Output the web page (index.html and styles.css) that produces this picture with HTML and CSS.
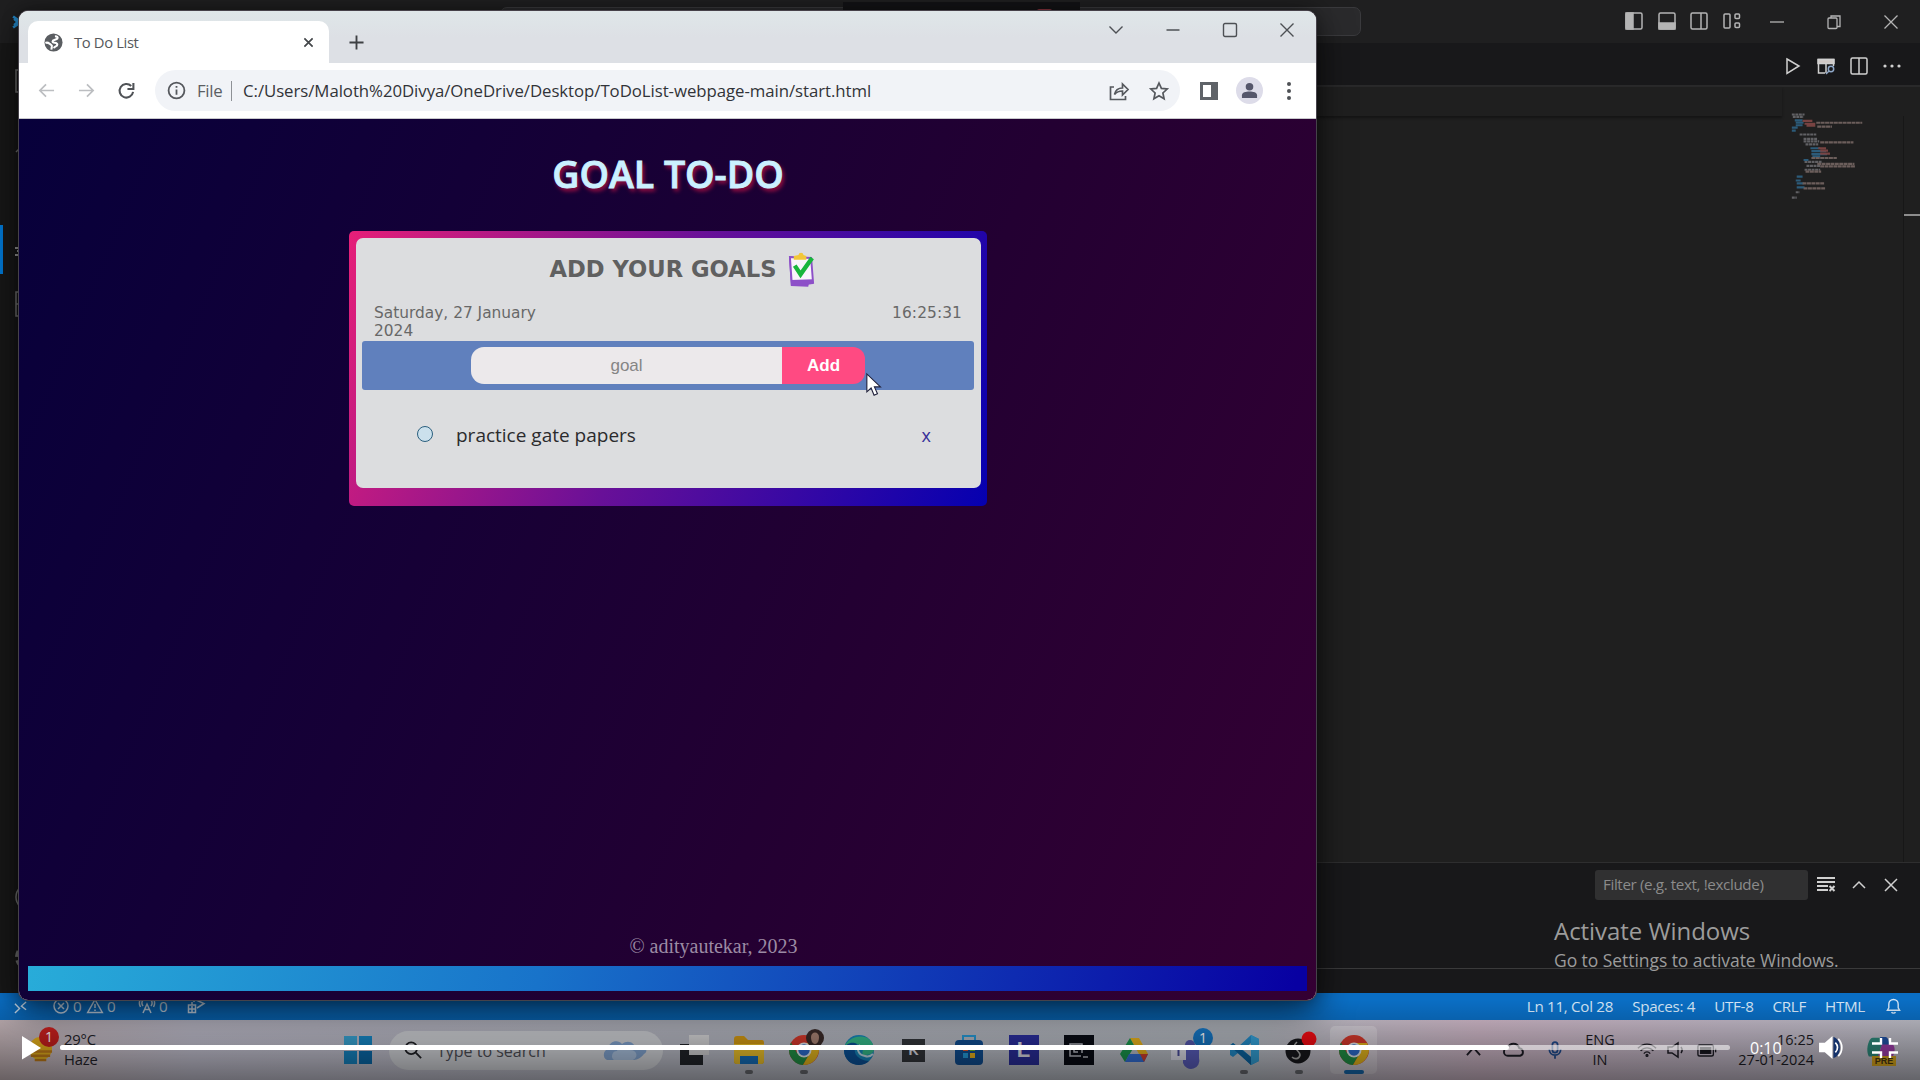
FILE: index.html
```html
<!DOCTYPE html>
<html lang="en">
<head>
<meta charset="utf-8">
<title>To Do List</title>
<link rel="stylesheet" href="styles.css">
</head>
<body>
<div class="desktop">

  <section class="editor">
    <header class="ed-title">
      <svg class="ed-logo" viewBox="0 0 20 20"><path d="M1 5l7 5-7 5M15 1L2 13M15 19L2 7" fill="none" stroke="#2489ca" stroke-width="2.4"/></svg>
      <div class="command"></div>
      <div class="layout-icons">
        <svg viewBox="0 0 18 18"><rect x="1" y="1" width="16" height="16" rx="1.5"/><path class="f" d="M1 1h7v16H1z"/></svg>
        <svg viewBox="0 0 18 18"><rect x="1" y="1" width="16" height="16" rx="1.5"/><path class="f" d="M1 11h16v6H1z"/></svg>
        <svg viewBox="0 0 18 18"><rect x="1" y="1" width="16" height="16" rx="1.5"/><path d="M11 1v16"/></svg>
        <svg viewBox="0 0 18 18"><rect x="1" y="2" width="6" height="14" rx="1"/><rect x="12" y="2" width="4.5" height="4.5" rx="1"/><rect x="12" y="11" width="4.5" height="4.5" rx="1"/></svg>
      </div>
      <div class="ed-controls">
        <svg viewBox="0 0 16 16"><path d="M1 8h14"/></svg>
        <svg viewBox="0 0 16 16"><rect x="2" y="4" width="9" height="10.500" rx="1"/><path d="M5 4V2h9v10.500h-3"/></svg>
        <svg viewBox="0 0 16 16"><path d="M1.500 1.500l13 13M14.500 1.500l-13 13"/></svg>
      </div>
    </header>
    <div class="ed-main">
      <aside class="activity">
        <svg viewBox="0 0 30 30"><path d="M2 5h16v22H2zM9 5V1h18v20h-8"/></svg>
        <svg class="search-ic" viewBox="0 0 30 30"><circle cx="17" cy="12" r="9"/><path d="M10 19L2 27"/></svg>
        <div class="current-view"><svg viewBox="0 0 30 30"><path d="M1 9h5v3H3h3v4H1M10 4l17 10-12 8"/></svg></div>
        <svg class="blocks" viewBox="0 0 30 30"><path d="M2 3h11v24H2zM2 15h24v12H2zM17 2h10v10H17z"/></svg>
        <svg class="account" viewBox="0 0 30 30"><circle cx="15" cy="15" r="13"/><circle cx="15" cy="11" r="5"/></svg>
        <svg class="gear" viewBox="0 0 30 30"><circle cx="15" cy="15" r="5"/><circle cx="15" cy="15" r="12" stroke-dasharray="6 3.400" stroke-width="4"/></svg>
      </aside>
      <div class="ed-column">
        <div class="tabs">
          <svg viewBox="0 0 18 18"><path d="M3 2l12 7-12 7.500z"/></svg>
          <svg viewBox="0 0 18 18"><path d="M1 2.500h16v4H1z" class="f"/><path d="M8 16H1.500V2.500h15V9M9 6v10"/><circle cx="14" cy="12" r="2.700" stroke="#8fa8c8"/><path d="M12 14l-3 3" stroke="#8fa8c8"/></svg>
          <svg viewBox="0 0 18 18"><rect x="1" y="1" width="16" height="16" rx="1.500"/><path d="M9 1v16"/></svg>
          <svg viewBox="0 0 18 18"><g class="dots"><circle cx="2" cy="9" r="1.600"/><circle cx="9" cy="9" r="1.600"/><circle cx="16" cy="9" r="1.600"/></g></svg>
        </div>
        <div class="crumbs"></div>
        <div class="code">
          <svg class="minimap" viewBox="0 0 78 92" fill="none">
            <path stroke="#77777c" stroke-dasharray="3 .6" d="M1 1.500h13M2 4h11M9 22h17M13 26.500h14M13 29h16M15 32h13M14 50h18M16 54h14M14 58h16M5 81h4M1 86.500h5"/>
            <path stroke="#316f97" d="M1 15h6M1 18h4M4 7.500h8M5 10h8M5 12.500h7M20 36h10M21 39h15M21 42h16M22 44.500h8M13 48h5M6 65h6M5 69h5M6 72h7M6 76h8"/>
            <path stroke="#96504e" d="M12 8h10M14 11h11M16 13h9M28 36h8M30 38.500h8M30 41.500h10"/>
            <path stroke="#85736f" stroke-dasharray="4 .5" d="M26 10h47M27 14h15M30 30h34M21 46h26M27 52h38M30 54.500h36M15 60h16M12 72h22M13 77h22"/>
          </svg>
          <div class="ruler"><i></i></div>
        </div>
        <div class="panel">
          <div class="panel-bar">
            <div class="filter">Filter (e.g. text, !exclude)</div>
            <svg viewBox="0 0 18 18"><path d="M0 2h18M0 6h18M0 10h11M0 14h11M12.500 10l5 5M17.500 10l-5 5" stroke-width="2"/></svg>
            <svg viewBox="0 0 18 18"><path d="M3 12l6-6 6 6"/></svg>
            <svg viewBox="0 0 18 18"><path d="M3 3l12 12M15 3L3 15"/></svg>
          </div>
          <div class="activate"><b>Activate Windows</b><span>Go to Settings to activate Windows.</span></div>
        </div>
      </div>
    </div>
    <footer class="status">
      <svg class="remote" viewBox="0 0 14 14"><path d="M1 3l5 5-5 5M13 1L8 5.500l5 4"/></svg>
      <div class="s-left">
        <svg viewBox="0 0 16 16"><circle cx="8" cy="8" r="7"/><path d="M5 5l6 6M11 5l-6 6"/></svg><span>0</span>
        <svg viewBox="0 0 16 16"><path d="M8 1.500L15.300 14.500H.7zM8 6v4M8 11.500v1.500"/></svg><span>0</span>
        <svg class="tower" viewBox="0 0 16 16"><path d="M4 15l4-9 4 9M5.500 11.500h5M4 2c-1.500 2-1.500 4 0 6M12 2c1.500 2 1.500 4 0 6M1.500 1C-.2 4-.2 6 1.500 9M14.500 1c1.700 3 1.700 5 0 8"/></svg><span>0</span>
        <svg class="live" viewBox="0 0 18 16"><rect x="1.500" y="7" width="7" height="7.500"/><path d="M7 4V1l10 4.500L10 10M5 7V4M1 11h8M5 8v6"/></svg>
      </div>
      <div class="s-right"><span>Ln 11, Col 28</span><span>Spaces: 4</span><span>UTF-8</span><span>CRLF</span><span>HTML</span>
        <svg viewBox="0 0 16 18"><path d="M1.500 13.500h13L13 11V7a5 5 0 0 0-10 0v4zM6 15.500c.5 1.500 3.500 1.500 4 0"/></svg></div>
    </footer>
  </section>

  <div class="meeting-bar"><i></i></div>
  <section class="browser">
    <header class="tabstrip">
      <div class="tab">
        <svg class="globe" viewBox="0 0 20 20"><circle cx="10" cy="10" r="9.500" fill="#5a5d61"/><path d="M11.500 3.500c2.500 0 3.500 1 2.500 2.500s-5 1-5 3 5 .5 5 3-3 1.500-3.500 4M1.500 10.500c3-1.500 4 1 6 2s0 2.500.5 5" fill="none" stroke="#fff" stroke-width="2.200"/></svg>
        <span>To Do List</span>
        <svg class="tab-x" viewBox="0 0 12 12"><path d="M1.500 1.500l9 9M10.500 1.500l-9 9"/></svg>
      </div>
      <svg class="plus" viewBox="0 0 16 16"><path d="M8 .5v15M.5 8h15"/></svg>
      <div class="win-controls">
        <svg viewBox="0 0 16 16"><path d="M1.500 4.500L8 11l6.500-6.500"/></svg>
        <svg viewBox="0 0 16 16"><path d="M1.500 8h13"/></svg>
        <svg viewBox="0 0 16 16"><rect x="1.500" y="1.500" width="13" height="13" rx="1.500"/></svg>
        <svg viewBox="0 0 16 16"><path d="M1.500 1.500l13 13M14.500 1.500l-13 13"/></svg>
      </div>
    </header>
    <div class="toolbar">
      <svg class="nav dim" viewBox="0 0 18 18"><path d="M17 9H2M8.500 2.500L2 9l6.500 6.500"/></svg>
      <svg class="nav dim" viewBox="0 0 18 18"><path d="M1 9h15M9.500 2.500L16 9l-6.500 6.500"/></svg>
      <svg class="nav" viewBox="0 0 18 18"><path d="M16 10.500A7.200 7.200 0 1 1 14 4.200M16.300 1v6.500H10" stroke-width="2.200"/></svg>
      <div class="omnibox">
        <svg class="info" viewBox="0 0 18 18"><circle cx="9" cy="9" r="7.500"/><path d="M9 8v5M9 4.700v1.800"/></svg>
        <span class="scheme">File</span><i></i>
        <span class="url">C:/Users/Maloth%20Divya/OneDrive/Desktop/ToDoList-webpage-main/start.html</span>
        <svg class="share" viewBox="0 0 20 20"><path d="M5 6H1.500v12.500h15V15M5.500 13.500c1-5 4-6.500 8-6.500V3l5.500 5.500-5.500 5.500v-4c-4 0-6 1-8 3.500z"/></svg>
        <svg class="star" viewBox="0 0 20 20"><path d="M10 2l2.400 5.400 5.800.6-4.300 4 1.200 5.800L10 14.800l-5.100 3L6.100 12 1.800 8l5.800-.6z"/></svg>
      </div>
      <svg class="side" viewBox="0 0 18 18"><path fill="#5f6368" d="M0 0h18v18H0z"/><path fill="#fff" d="M3 3h8v12H3z"/></svg>
      <div class="avatar"><svg viewBox="0 0 18 18"><circle cx="9" cy="5" r="4"/><path d="M1 17v-3c0-3 4-4 8-4s8 1 8 4v3z"/></svg></div>
      <div class="menu"><i></i><i></i><i></i></div>
    </div>
    <main class="page">
      <h1>GOAL TO-DO</h1>
      <div class="card">
        <div class="card-in">
          <h2>ADD YOUR GOALS
            <svg viewBox="0 0 28 36"><path d="M1 6l3 2v21l18 2-1 5-18-1z" fill="#8d50c8"/><path d="M2 5l22 1 2 26-22 2z" fill="#f8f4fb" stroke="#8d50c8" stroke-width="2"/><path d="M3 29l23-1v5l-22 2z" fill="#8d50c8"/><path d="M6 4l5-1c0-3 5-3 5 0l3 1v4H6z" fill="#f2c73a"/><path d="M7 14l6 9L25 6" fill="none" stroke="#17b53c" stroke-width="4.500"/></svg>
          </h2>
          <div class="meta"><span class="date">Saturday, 27 January 2024</span><span class="clock">16:25:31</span></div>
          <div class="entry"><div class="field">goal</div><div class="add">Add</div></div>
          <div class="goal"><i></i><span>practice gate papers</span><em>x</em></div>
        </div>
      </div>
      <div class="credit">© adityautekar, 2023</div>
      <div class="strip"></div>
    </main>
  </section>
  <svg class="cursor" viewBox="0 0 20 28"><path d="M1 1v21l5-4.500 3.500 8.500 4-1.800-3.600-8H17z" fill="#fff" stroke="#20203a" stroke-width="1.300"/></svg>

  <footer class="taskbar">
    <div class="weather">
      <div class="w-icon"><svg viewBox="0 0 26 26"><circle cx="13" cy="12" r="12" fill="#e8b21c"/><path d="M1 15h24M3 19.500h20M7 24h12" stroke="#c47d18" stroke-width="2.500"/></svg><b>1</b></div>
      <div class="w-text"><span>29°C</span><span>Haze</span></div>
    </div>
    <div class="t"><svg viewBox="0 0 32 32"><path d="M2 2h13v13H2z" fill="#38a3d3"/><path d="M17 2h13v13H17zM2 17h13v13H2z" fill="#1687c6"/><path d="M17 17h13v13H17z" fill="#0a6cae"/></svg></div>
    <div class="search">
      <svg class="mag" viewBox="0 0 20 20"><circle cx="8" cy="8" r="6.500"/><path d="M13 13l6 6"/></svg>
      <span>Type to search</span>
      <svg class="clouds" viewBox="0 0 46 24"><path d="M6 22a6 6 0 0 1 1-11C8 3 17 1 21 6c6-5 13-1 13 4 9-4 15 3 9 6-2 3-7 6-10 6z" fill="#86a9d6"/><path d="M13 22a5 5 0 0 1 3-9c2-6 9-6 12-1 8-1 10 7 4 10z" fill="#b0c8e6"/></svg>
    </div>
    <div class="apps">
      <div class="t"><svg viewBox="0 0 32 32"><path d="M11 1h20v20H11z" fill="#d6d6d8"/><path d="M2 10h9v11h14v10H2z" fill="#22252a"/></svg></div>
      <div class="t on"><svg viewBox="0 0 32 32"><path d="M1 5q0-3 3-3h7l4 4h14q2 0 2 3v18q0 3-3 3H4q-3 0-3-3z" fill="#d49a13"/><path d="M1 10h30v17q0 3-3 3H4q-3 0-3-3z" fill="#f3c62c"/><path d="M7 22h18v8H7z" fill="#1672c0"/></svg></div>
      <div class="t on"><svg viewBox="0 0 32 32"><use href="#chrome"/><circle cx="27" cy="4" r="9" fill="#3a2a29"/><path d="M23 3c0-6 8-6 8 0 0 3-1 7-4 7s-4-4-4-7z" fill="#a88274"/></svg></div>
      <div class="t"><svg viewBox="0 0 32 32"><circle cx="16" cy="16" r="15" fill="#1687bd"/><path d="M1 14C4 1 29-4 31 15c0 5-5 6-11 6-2-3 3-8-3-10S4 9 1 14z" fill="#35bc8c"/><path d="M1 16c1-7 9-9 13-6-5 6-2 16 12 17C18 35 1 31 1 16z" fill="#0b529a"/><path d="M17 11c-4 3-2 10 5 11 3 1 6 0 8-2" stroke="#c5dfe8" stroke-width="2" fill="none"/></svg></div>
      <div class="t"><div class="sq k">K</div></div>
      <div class="t"><svg viewBox="0 0 32 32"><path d="M10 6V2h12v4" fill="none" stroke="#269ad6" stroke-width="2"/><rect x="2" y="6" width="28" height="25" rx="4" fill="#104f94"/><path d="M10 12h5v5h-5z" fill="#e35a2a"/><path d="M17 12h5v5h-5z" fill="#70b52c"/><path d="M10 19h5v5h-5z" fill="#24a0e2"/><path d="M17 19h5v5h-5z" fill="#eeb71b"/></svg></div>
      <div class="t"><div class="sq l">L</div></div>
      <div class="t"><svg viewBox="0 0 32 32"><path d="M1 1h30v30H1z" fill="#080b14"/><path d="M18 22H7V10h12v9M15 14h-4v4h4M20 23h5" stroke="#b8bcc4" stroke-width="1.500" fill="none"/></svg></div>
      <div class="t"><svg viewBox="0 0 32 32"><path d="M12 4h9l9 16h-9z" fill="#edb51c"/><path d="M12 4l4.500 8L7 28l-5-8z" fill="#1a9a4e"/><path d="M11 20h19l-4 8H7z" fill="#3472dc"/><path d="M22 20h8l-4 8z" fill="#d4402f"/></svg></div>
      <div class="t"><svg viewBox="0 0 32 32"><circle cx="17" cy="11" r="5" fill="#5558af"/><path d="M10 15h16v9a8 8 0 0 1-16 5z" fill="#5b5fc0"/><path d="M-2 11h15v15H-2z" fill="#e4e4f0"/><path d="M2 15h7M5.500 15v7" stroke="#4a4da0" stroke-width="2"/></svg><b class="badge">1</b></div>
      <div class="t on"><svg viewBox="0 0 32 32"><path d="M23 1l8 4v22l-8 4L10 19 5 23l-3-2V11l3-2 5 4zM23 9l-8 7 8 7z" fill="#238dcb" fill-rule="evenodd"/><path d="M5 9L23 23v8L2 12z" fill="#0d67a5"/><path d="M23 1l8 4v22l-8 4z" fill="#35a4dc"/></svg></div>
      <div class="t on"><svg viewBox="0 0 32 32"><circle cx="15" cy="17" r="12.500" fill="#17171c"/><path d="M14 8c-7 6 3 8 3 13-1 5-6 4-8 2" fill="none" stroke="#aaa" stroke-width="1.600"/><circle cx="26" cy="5" r="7.500" fill="#f50b13"/></svg></div>
      <div class="t on current"><svg viewBox="0 0 32 32"><g id="chrome"><circle cx="16" cy="16" r="15" fill="#d7392c"/><path d="M3 8.500A15 15 0 0 0 15 31l7-12-13 0z" fill="#239447"/><path d="M15 31a15 15 0 0 0 14-22H16l6 10z" fill="#ebbb1d"/><circle cx="16" cy="16" r="7.500" fill="#e9edf1"/><circle cx="16" cy="16" r="5.700" fill="#2d6ed2"/></g></svg></div>
    </div>
    <div class="tray">
      <svg class="tr-up" viewBox="0 0 16 16"><path d="M1 13l7-8 7 8"/></svg>
      <svg class="tr-cloud" viewBox="0 0 22 16"><path d="M5 14a4 4 0 0 1 0-8c2-6 10-6 12 0 5 1 5 7 1 8z" stroke-width="2"/></svg>
      <svg class="tr-mic" viewBox="0 0 16 20"><path d="M5 4a3 3 0 0 1 6 0v6a3 3 0 0 1-6 0zM1.500 9c0 9 13 9 13 0M8 15.500V20"/></svg>
      <div class="lang"><span>ENG</span><span>IN</span></div>
      <svg class="tr-wifi" viewBox="0 0 22 16"><path d="M1 6c6-6 14-6 20 0M4 9c4-4.500 10-4.500 14 0M7.500 12c2-2.500 5-2.500 7 0"/><circle cx="11" cy="14" r="1"/></svg>
      <svg class="tr-vol" viewBox="0 0 20 16"><path d="M1 5h4l6-4v14l-6-4H1zM14 5c1.500 2 1.500 4 0 6"/></svg>
      <svg class="tr-bat" viewBox="0 0 22 14"><rect x="1" y="1" width="17" height="12" rx="2"/><path class="charge" d="M4 4h11v6H4z"/><path d="M20.500 5v4"/></svg>
      <div class="when"><span>16:25</span><span>27-01-2024</span></div>
      <div class="copilot"><svg viewBox="0 0 32 30"><path d="M7 2h12L13 22H3C-1 15 3 2 7 2z" fill="#2e8c7d"/><path d="M15 1h6q3 0 4 9l-8 4z" fill="#2254a8"/><path d="M17 9h12c4 6 0 15-4 15H12z" fill="#9f3eaa"/></svg><b>PRE</b></div>
    </div>
  </footer>

  <div class="player">
    <svg class="play" viewBox="0 0 20 24"><path d="M0 0l19 12L0 23.500z"/></svg>
    <div class="track"><i></i></div>
    <span>0:10</span>
    <svg class="sound" viewBox="0 0 28 24"><path d="M1 7h6l8-7v24l-8-7H1z" fill="#fff"/><path d="M16 1c9 2 9 20 0 22z" fill="#14326b"/><path d="M18 7c3 3 3 7 0 10M21 3c5 5 5 13 0 18" stroke="#fff" stroke-width="1.800" fill="none"/></svg>
    <svg class="exit" viewBox="0 0 26 20"><path d="M0 5.500h9V0M26 5.500h-8V0M0 14.500h9V20M26 14.500h-8V20" fill="none" stroke="#fff" stroke-width="2.400"/></svg>
  </div>
</div>
</body>
</html>
```
FILE: styles.css
```css
* { box-sizing: border-box; }
body { margin: 0; width: 1920px; height: 1080px; overflow: hidden; background: #1f1f1f; font-family: "Open Sans", "Noto Sans", sans-serif; }
svg { display: block; flex: none; overflow: visible; }
.desktop { position: relative; width: 1920px; height: 1080px; display: flex; flex-direction: column; overflow: hidden; }

/* code editor */
.editor { height: 1020px; display: flex; flex-direction: column; background: #1f1f1f; }
.editor svg { fill: none; stroke: #b4b4b4; stroke-width: 1.5; }
.editor svg .f { fill: #b4b4b4; }
.ed-title { height: 43px; display: flex; align-items: flex-start; background: #1f1f20; }
.editor .ed-logo { width: 22px; height: 22px; margin: 11px 0 0 12px; }
.command { width: 861px; height: 29px; margin: 7px 0 0 466px; border: 1px solid #3a3a3d; border-radius: 7px; background: #2a2a2c; }
.layout-icons { display: flex; gap: 14.500px; margin: 12px 0 0 264px; }
.layout-icons svg { width: 18px; height: 18px; }
.ed-controls { display: flex; gap: 41px; margin: 14px 0 0 28.500px; }
.ed-controls svg { width: 16px; height: 16px; stroke-width: 1.3; }
.ed-main { flex: 1; display: flex; min-height: 0; }
.activity { width: 60px; height: 950px; overflow: hidden; display: flex; flex-direction: column; background: #181818; padding: 22px 0 0 14px; }
.activity svg { width: 30px; height: 30px; stroke: #777; margin-bottom: 30px; }
.activity .search-ic { margin-bottom: 26px; }
.current-view { flex: none; height: 49px; margin: 0 0 15px -14px; padding: 14px 0 0 11px; border-left: 3px solid #0078d4; }
.activity .search-ic + .current-view { margin-top: 44px; }
.current-view svg { stroke: #ccc; }
.activity .blocks { margin-bottom: 563px; }
.ed-column { flex: 1; display: flex; flex-direction: column; min-width: 0; }
.tabs { height: 44px; background: #18181a; border-bottom: 2px solid #29292a; display: flex; justify-content: flex-end; align-items: center; gap: 15px; padding: 3px 19px 0 0; }
.tabs svg { width: 18px; height: 18px; stroke: #d0d0d0; }
.tabs svg .dots { fill: #d0d0d0; stroke: none; }
.tabs svg .f { fill: #d0c8c4; }
.crumbs { height: 29px; box-shadow: 0 2px 2px #151515; margin-right: 138px; }
.code { flex: 1; display: flex; justify-content: flex-end; }
.editor .minimap { width: 78px; height: 90px; margin: -3px 35px 0 0; opacity: .75; stroke-width: 2.2; }
.ruler { width: 17px; border-left: 1px solid #171717; }
.ruler i { display: block; height: 2px; margin-top: 98px; background: #8d8d8d; }
.panel { height: 131px; background: #18181a; border-top: 1px solid #2e2e2f; }
.panel-bar { height: 43px; display: flex; align-items: center; justify-content: flex-end; padding-right: 20px; gap: 14px; }
.filter { width: 213px; height: 30px; padding-left: 8px; border-radius: 3px; background: #303031; color: #8b8b8b; font-size: 15.200px; line-height: 29px; letter-spacing: -.38px; margin-right: -5px; white-space: nowrap; }
.panel-bar svg { width: 18px; height: 18px; stroke: #d0d0d0; }
.panel-bar svg:nth-child(3) { margin-left: 1px; }
.activate { height: 63px; border-bottom: 1px solid #3a3a3b; padding-left: 1494px; color: #9c9c9c; white-space: nowrap; }
.activate b { display: block; font-weight: 400; font-size: 24px; line-height: 34px; padding-top: 8px; letter-spacing: -.05px; height: 40px; }
.activate span { display: block; font-size: 17.500px; line-height: 26px; margin-top: 1px; letter-spacing: -.06px; }
.status { height: 27px; display: flex; align-items: center; padding-bottom: 2px; background: #0a6ec4; color: #d5e6f7; font-size: 15.200px; letter-spacing: -.3px; padding-right: 19px; }
.editor .status svg { stroke: #d5e6f7; }
.status .remote { width: 13px; height: 13px; margin: 3px 0 0 14px; }
.s-left { display: flex; align-items: center; margin-left: 26px; }
.s-left svg { width: 16px; height: 16px; margin-right: 4px; }
.s-left span { width: 14px; }
.s-left .tower { margin-left: 18px; }
.s-left .live { width: 18px; margin-left: 14px; }
.s-right { display: flex; align-items: center; margin-left: auto; gap: 19px; }
.s-right svg { width: 15px; height: 18px; margin-left: 2px; }

/* browser window */
.meeting-bar { position: absolute; left: 843px; top: 2px; width: 237px; height: 12px; background: #131316; }
.meeting-bar i { display: block; width: 15px; height: 4px; margin: 7px 0 0 194px; border-radius: 2px; background: #8a3440; }
.browser { position: absolute; left: 19px; top: 11px; width: 1297px; height: 989px; display: flex; flex-direction: column; border-radius: 9px; overflow: hidden; background: #fff; box-shadow: 0 0 0 1px #46424a, 0 12px 36px rgba(0, 0, 0, .6), 0 0 16px rgba(0, 0, 0, .35); }
.tabstrip { height: 52px; display: flex; background: linear-gradient(#dfe7e9, #dde0e5 50%); }
.tab { width: 301px; height: 42px; margin: 10px 0 0 9px; padding: 0 15px 0 16px; border-radius: 10px 10px 0 0; background: #fff; display: flex; align-items: center; color: #56585c; font-size: 14.800px; letter-spacing: -.37px; }
.globe { width: 19px; height: 19px; margin-right: 11px; }
.tab-x { width: 11px; height: 11px; margin-left: auto; stroke: #44474a; stroke-width: 1.900; }
.plus { width: 15px; height: 15px; margin: 24px 0 0 20px; stroke: #3e4144; stroke-width: 2; }
.win-controls { display: flex; gap: 41px; margin: 10.500px 21px 0 auto; }
.win-controls svg { width: 16px; height: 16px; fill: none; stroke: #4d5054; stroke-width: 1.400; }
.toolbar { height: 56px; display: flex; align-items: center; padding-left: 19px; border-bottom: 1px solid #c8c8cc; }
.nav { width: 17px; height: 17px; margin-right: 23px; fill: none; stroke: #505357; stroke-width: 1.800; }
.dim { stroke: #bcbec1; }
.omnibox { width: 1025px; height: 41px; margin-left: -3px; padding-left: 12px; border-radius: 21px; background: #f1f3f7; display: flex; align-items: center; font-size: 16.800px; color: #313338; white-space: nowrap; }
.omnibox svg { fill: none; stroke: #55585d; stroke-width: 1.700; }
.info { width: 19px; height: 19px; margin-right: 11px; }
.scheme { width: 34px; color: #5b5e63; letter-spacing: -.3px; }
.omnibox i { width: 1px; height: 20px; margin-right: 11px; background: #8e9196; }
.url { width: 866px; letter-spacing: -.05px; }
.share { width: 20px; height: 20px; }
.star { width: 20px; height: 20px; margin-left: 20px; }
.side { width: 18px; height: 18px; margin-left: 20px; }
.avatar { width: 27px; height: 27px; margin-left: 18px; border-radius: 50%; background: #dddce9; display: grid; place-items: center; }
.avatar svg { width: 17px; height: 17px; fill: #55566b; }
.menu { display: grid; gap: 3px; margin-left: 24px; }
.menu i { width: 4px; height: 4px; border-radius: 50%; background: #4e5155; }

/* to-do page */
.page { flex: 1; min-height: 0; display: flex; flex-direction: column; align-items: center; padding: 0 9px 9px; background: linear-gradient(113deg, #07003b 0%, #160036 35%, #230032 62%, #340033 100%); }
.page h1 { margin: 25px 0 0 1px; height: 87px; font: 600 37.500px/60px "Open Sans", sans-serif; color: #cbf1ff; -webkit-text-stroke: .9px #cbf1ff; text-shadow: 2px 3px 4px #a80f42; white-space: nowrap; }
.card { width: 638px; height: 275px; margin-left: 1px; padding: 7px 6px 18px 7px; border-radius: 5px; background: linear-gradient(112deg, #e61f78 0%, #681098 48%, #0500b0 100%); }
.card-in { height: 250px; border-radius: 7px; background: #dcdddf; padding: 13px 7px 0 6px; }
.card h2 { height: 36px; margin: 0; padding-left: 28px; display: flex; align-items: center; justify-content: center; gap: 11px; font: 700 22.650px/37px "DejaVu Sans", sans-serif; color: #606060; white-space: nowrap; }
.card h2 svg { width: 27px; height: 35px; }
.meta { height: 54px; padding: 17px 12px 0 12px; display: flex; justify-content: space-between; color: #686868; font: 15.400px/18px "DejaVu Sans", sans-serif; }
.date { width: 190px; }
.clock { letter-spacing: .1px; }
.entry { height: 49px; border-radius: 3px; background: #6080bd; display: flex; padding: 6px 0 0 109px; font: 17px/37px "Liberation Sans", sans-serif; }
.field { width: 311px; height: 37px; border-radius: 13px 0 0 13px; background: #ece9eb; color: #858585; text-align: center; }
.add { width: 83px; height: 37px; border-radius: 0 12px 12px 0; background: #ff4a82; color: #fff; font-weight: 700; text-align: center; }
.goal { height: 90px; display: flex; align-items: center; padding: 0 43px 0 55px; font-size: 19px; color: #2b2b2d; }
.goal i { width: 16px; height: 16px; margin: -2px 23px 0 0; border: 1.500px solid #2b5f7e; border-radius: 50%; background: #cbe0ec; }
.goal em { margin-left: auto; font-style: normal; color: #372f99; font-size: 18px; }
.credit { margin-top: auto; height: 38px; padding-left: 92px; font: 20px/37px "Liberation Serif", serif; color: #9c8ba4; }
.strip { width: 100%; height: 25px; background: linear-gradient(105deg, #28acd9, #1873ca 40%, #0800a2 99%); }
.cursor { position: absolute; left: 866px; top: 373px; width: 17px; height: 24px; }

/* taskbar */
.taskbar { height: 60px; display: flex; align-items: center; background: linear-gradient(90deg, #c9b9bd, #c7c5d4 10%, #bfc1cc 35%, #bec3cb 65%, #cfb8c8 77%, #c6bccb 90%, #c0c0ca); }
.weather { width: 330px; display: flex; align-items: center; padding: 0 0 2px 28px; color: #23232a; }
.w-icon { position: relative; }
.w-icon svg { width: 25px; height: 25px; }
.w-icon b { position: absolute; left: 11px; top: -10px; width: 20px; height: 20px; border-radius: 50%; background: #c8201e; color: #fff; font: 14px/20px "Open Sans", sans-serif; text-align: center; }
.w-text { margin-left: 11px; font-size: 14.800px; line-height: 20px; letter-spacing: -.2px; }
.w-text span, .lang span, .when span { display: block; }
.t { position: relative; width: 55px; height: 60px; display: grid; place-items: center; }
.t svg { width: 32px; height: 32px; }
.search { width: 274px; height: 39px; margin: 0 3px 0 4px; padding: 0 16px 0 15px; border-radius: 20px; background: #d9dbe0; display: flex; align-items: center; color: #505158; font-size: 16px; white-space: nowrap; }
.mag { width: 18px; height: 18px; margin-right: 15px; fill: none; stroke: #202126; stroke-width: 2; }
.search span { padding-top: 2px; }
.clouds { width: 46px; height: 24px; margin-left: auto; }
.apps { display: flex; }
.on::after { content: ""; position: absolute; bottom: 6px; left: 24px; width: 8px; height: 4px; border-radius: 2px; background: #6a6c72; }
.current::after { left: 18px; width: 20px; background: #176bb0; }
.current::before { content: ""; position: absolute; inset: 6px 4px; border-radius: 5px; background: rgba(255, 255, 255, .25); }
.current svg { position: relative; }
.sq { width: 30px; height: 30px; font: 700 22px/29px "Liberation Sans", sans-serif; color: #e3e3eb; text-align: center; }
.l { background: #2a2e9e; }
.k { width: 23px; height: 23px; background: #33363b; font-size: 14px; line-height: 23px; }
.badge { position: absolute; right: 3px; top: 8px; width: 20px; height: 20px; border-radius: 50%; background: #1575c2; color: #fff; font: 14px/20px "Open Sans", sans-serif; text-align: center; }
.tray { flex: 1; height: 60px; display: flex; align-items: center; padding-left: 85px; color: #1d1c25; font-size: 14.500px; line-height: 20px; }
.tray svg { fill: none; stroke: #1d1c25; stroke-width: 1.500; }
.tray .tr-up { width: 15px; height: 15px; stroke-width: 2; }
.tray .tr-cloud { width: 21px; height: 16px; margin-left: 22px; }
.tray .tr-mic { width: 14px; height: 20px; margin-left: 24px; stroke: #204c90; stroke-width: 2; }
.lang { width: 40px; margin-left: 18px; text-align: center; }
.tr-wifi { width: 20px; height: 16px; margin-left: 17px; }
.tr-vol { width: 20px; height: 16px; margin-left: 10px; }
.tr-bat { width: 20px; height: 13px; margin-left: 10px; }
.tr-bat .charge { fill: #15151c; }
.when { width: 97px; text-align: right; }
.copilot { position: relative; margin-left: 51px; }
.tray .copilot svg { width: 32px; height: 28px; stroke: none; }
.copilot b { position: absolute; left: 7px; top: 20px; width: 24px; height: 10px; background: #dca91d; font: 700 9px/10px "Liberation Sans", sans-serif; text-align: center; color: #463713; }

/* video controls over the recording */
.player { position: absolute; left: 0; right: 0; bottom: 0; height: 80px; padding: 15px 22px 0; display: flex; align-items: center; background: linear-gradient(rgba(0, 0, 0, 0), rgba(0, 0, 0, .48)); color: #fff; font: 16px/22px "Open Sans", sans-serif; }
.play { width: 20px; height: 24px; fill: #fff; }
.track { width: 1670px; height: 5px; margin-left: 18px; border-radius: 3px; background: rgba(255, 255, 255, .55); }
.track i { display: block; width: 1449px; height: 5px; border-radius: 3px; background: #fff; }
.player span { width: 68px; padding-left: 20px; }
.sound { width: 27px; height: 23px; margin-left: 20px; }
.exit { width: 26px; height: 20px; margin-left: 27px; }
```
